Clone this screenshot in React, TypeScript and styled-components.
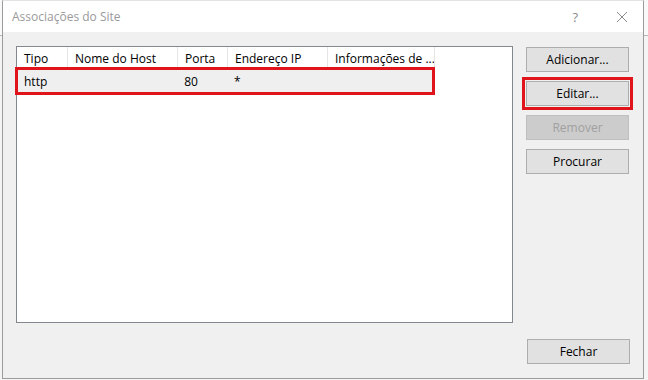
import React from "react";
import styled, { createGlobalStyle } from "styled-components";

const GlobalStyle = createGlobalStyle`
  html, body {
    margin: 0;
    padding: 0;
    background: #f9f9f9;
  }
  body {
    font-family: "Open Sans", "Noto Sans", sans-serif;
    font-size: 12px;
    color: #000;
  }
`;

type Column = { label: string; width: number };

const columns: Column[] = [
  { label: "Tipo", width: 51 },
  { label: "Nome do Host", width: 110 },
  { label: "Porta", width: 50 },
  { label: "Endereço IP", width: 100 },
  { label: "Informações de ...", width: 107 },
];

const bindings = [{ values: ["http", "", "80", "*", ""] }];

const App = () => {
  return (
    <Page>
      <GlobalStyle />
      <Dialog>
        <TitleBar>
          <Title>Associações do Site</Title>
          <TitleButtons>
            <HelpGlyph>?</HelpGlyph>
            <CloseIcon viewBox="0 0 10 10">
              <path d="M0 0 L10 10 M10 0 L0 10" stroke="#8a8a8a" strokeWidth="1" />
            </CloseIcon>
          </TitleButtons>
        </TitleBar>

        <Body>
          <MainRow>
            <ListView>
              <HeaderRow>
                {columns.map((col) => (
                  <HeaderCell key={col.label} $width={col.width}>
                    {col.label}
                  </HeaderCell>
                ))}
              </HeaderRow>
              {bindings.map((row, i) => (
                <DataRow key={i} $marked>
                  {row.values.map((value, j) => (
                    <DataCell key={j} $width={columns[j].width}>
                      {value}
                    </DataCell>
                  ))}
                </DataRow>
              ))}
            </ListView>

            <ButtonColumn>
              <DialogButton>Adicionar...</DialogButton>
              <DialogButton $marked>Editar...</DialogButton>
              <DialogButton disabled>Remover</DialogButton>
              <DialogButton>Procurar</DialogButton>
            </ButtonColumn>
          </MainRow>

          <Footer>
            <DialogButton>Fechar</DialogButton>
          </Footer>
        </Body>
      </Dialog>
    </Page>
  );
};

const Page = styled.div`
  width: 648px;
  height: 380px;
  display: flex;
  align-items: flex-start;
  padding-left: 2px;
  box-sizing: border-box;
  background: linear-gradient(to bottom, #f9f9f9 35px, #b5b5b5 35px, #b5b5b5 36px, #f4f4f4 36px);
`;

const Dialog = styled.div`
  width: 642px;
  height: 379px;
  box-sizing: border-box;
  display: flex;
  flex-direction: column;
  background: #f0f0f0;
  border: 1px solid #9b9b9b;
  border-top-color: #e3e3e3;
`;

const TitleBar = styled.div`
  height: 31px;
  display: flex;
  align-items: center;
  justify-content: space-between;
  background: #fff;
  padding: 0 16px 0 9px;
`;

const Title = styled.div`
  color: #9a9a9a;
  font-size: 12px;
  padding-bottom: 1px;
`;

const TitleButtons = styled.div`
  display: flex;
  align-items: center;
  gap: 39px;
`;

const HelpGlyph = styled.span`
  color: #8a8a8a;
  font-size: 13px;
`;

const CloseIcon = styled.svg`
  width: 10px;
  height: 10px;
`;

const Body = styled.div`
  flex: 1;
  display: flex;
  flex-direction: column;
  padding: 14px 13px 14px 13px;
`;

const MainRow = styled.div`
  display: flex;
  gap: 13px;
  height: 277px;
`;

const ListView = styled.div`
  width: 497px;
  box-sizing: border-box;
  background: #fff;
  border: 1px solid #828790;
  display: flex;
  flex-direction: column;
`;

const HeaderRow = styled.div`
  display: flex;
  height: 22px;
`;

const HeaderCell = styled.div<{ $width: number }>`
  width: ${(p) => p.$width}px;
  box-sizing: border-box;
  padding-left: 7px;
  display: flex;
  align-items: center;
  border-right: 1px solid #e5e5e5;
  white-space: nowrap;
  overflow: hidden;
`;

const DataRow = styled.div<{ $marked?: boolean }>`
  display: flex;
  width: 416px;
  height: 24px;
  background: #efefef;
  outline: ${(p) => (p.$marked ? "3px solid #e0141b" : "none")};
  outline-offset: -1px;
`;

const DataCell = styled.div<{ $width: number }>`
  width: ${(p) => p.$width}px;
  box-sizing: border-box;
  padding-left: 7px;
  display: flex;
  align-items: center;
  white-space: nowrap;
`;

const ButtonColumn = styled.div`
  display: flex;
  flex-direction: column;
  gap: 9px;
  padding-top: 1px;
`;

const DialogButton = styled.button<{ $marked?: boolean }>`
  width: 103px;
  height: 25px;
  box-sizing: border-box;
  font-family: inherit;
  font-size: 12px;
  color: #000;
  background: #e1e1e1;
  border: 1px solid #adadad;
  padding: 0 0 1px 0;
  outline: ${(p) => (p.$marked ? "3px solid #e0141b" : "none")};
  outline-offset: 1px;

  &:disabled {
    color: #a0a0a0;
    background: #cccccc;
    border-color: #bfbfbf;
  }
`;

const Footer = styled.div`
  display: flex;
  justify-content: flex-end;
  margin-top: 16px;
`;

export default App;
